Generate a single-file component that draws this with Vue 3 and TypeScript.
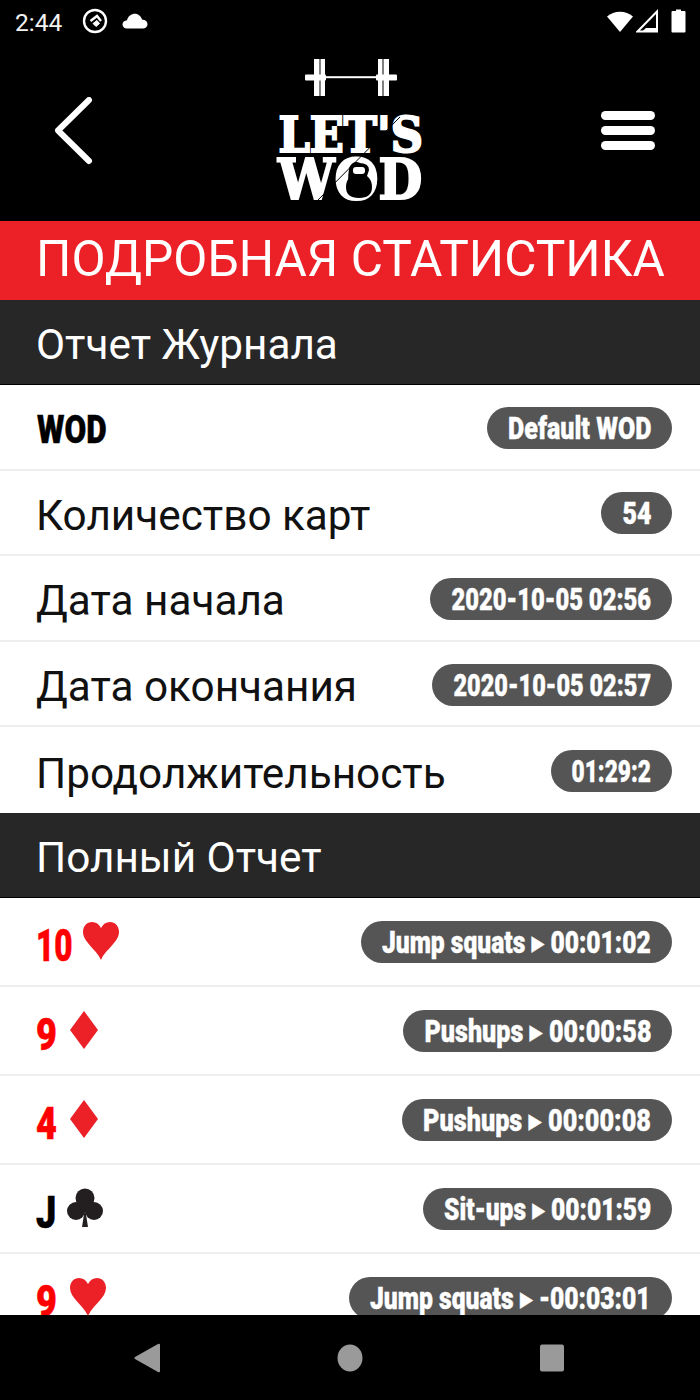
<template>
    <div ref="root" class="screen">
        <!-- Status bar -->
        <div class="status-bar">
            <span class="clock">2:44</span>
            <svg class="status-icon" width="26" height="26" viewBox="0 0 26 26" fill="none" stroke="#fff">
                <circle cx="13" cy="13" r="11" stroke-width="2.4" />
                <path d="M8.5 13 L15 8 L19 13" stroke-width="2.4" />
                <path d="M11 15.5 L15 12.5 L17.5 15.5 L14 18.5 Z" fill="#fff" stroke-width="1" />
            </svg>
            <svg class="status-icon cloud" width="26" height="16" viewBox="0 0 26 16" fill="#fff">
                <path d="M5 15.5 C2 15.5 0.5 13.5 0.5 11.5 C0.5 9 2.5 7.5 5 7.3 C6 3 9.5 0.8 12.8 0.8 C16.5 0.8 19 3.2 20 6.6 C23 6.8 25.5 8.6 25.5 11.3 C25.5 13.8 23.5 15.5 21 15.5 Z" />
            </svg>
            <div class="status-right">
                <svg width="28" height="24" viewBox="0 0 28 24" fill="#fff">
                    <path d="M1 7.5 C8 1 20 1 27 7.5 L14 23 Z" />
                </svg>
                <svg width="22" height="24" viewBox="0 0 22 24">
                    <path d="M1.5 22.5 L21 2.5 L21 22.5 Z" fill="none" stroke="#fff" stroke-width="2" />
                    <path d="M6 22.5 L21 22.5 L21 19 L10 19 Z" fill="#fff" />
                </svg>
                <svg class="battery" width="15" height="24" viewBox="0 0 15 24" fill="#fff">
                    <path d="M5 0.5 H10 V2 H13.5 Q14.5 2 14.5 3 V22.5 Q14.5 23.5 13.5 23.5 H1.5 Q0.5 23.5 0.5 22.5 V3 Q0.5 2 1.5 2 H5 Z" />
                </svg>
            </div>
        </div>

        <!-- App header -->
        <header class="app-header">
            <svg class="back-icon" width="40" height="68" viewBox="0 0 40 68" fill="none" stroke="#fff" stroke-width="6" stroke-linecap="round" stroke-linejoin="round">
                <path d="M35 3 L4 33.5 L35 64" />
            </svg>
            <div class="logo">
                <svg class="barbell" width="92" height="37" viewBox="0 0 92 37" fill="#fff">
                    <rect x="20" y="17.2" width="52" height="2" />
                    <rect x="0" y="15.5" width="21" height="6" rx="1" />
                    <rect x="71" y="15.5" width="21" height="6" rx="1" />
                    <rect x="9" y="0" width="5.5" height="37" />
                    <rect x="15.5" y="0" width="4.5" height="37" />
                    <rect x="73" y="0" width="4.5" height="37" />
                    <rect x="78.5" y="0" width="5.5" height="37" />
                </svg>
                <div class="logo-text lets">LET'S</div>
                <div class="logo-text wod">WOD</div>
                <svg class="logo-overlay" width="146" height="86" viewBox="0 0 146 86">
                    <path d="M38 85 L122 0" stroke="#000" stroke-width="1" />
                    <path d="M71 53 Q71 46 81 46 Q91 46 91 53 L89 59 Q94 63 94 70 Q94 81 81 81 Q68 81 68 70 Q68 63 73 59 Z" fill="#000" />
                    <rect x="75" y="50" width="12" height="7" rx="3" fill="#fff" />
                </svg>
            </div>
            <div class="menu-icon">
                <span></span>
                <span></span>
                <span></span>
            </div>
        </header>

        <div class="page-title">ПОДРОБНАЯ СТАТИСТИКА</div>

        <div class="content">
            <div class="section-title">Отчет Журнала</div>
            <div v-for="row in journalRows" :key="row.label" class="row">
                <span class="row-label" :class="{ 'row-label-bold': row.bold }">{{ row.label }}</span>
                <span class="pill" :style="{ width: row.pill + 'px' }"><span class="pill-text">{{ row.value }}</span></span>
            </div>

            <div class="section-title">Полный Отчет</div>
            <div v-for="(card, i) in cards" :key="i" class="row card-row">
                <span class="card-name">
                    <span class="card-rank" :class="{ red: card.suit !== 'club', wide: card.rank.length > 1 }">
                        <span class="rank-text">{{ card.rank }}</span>
                    </span>
                    <svg v-if="card.suit === 'heart'" class="suit" width="38" height="40" viewBox="0 0 38 40" fill="#ec2027">
                        <path d="M19 39 C15 29 1 21 1 11 C1 5 5 1 10 1 C14 1 17 3 19 7 C21 3 24 1 28 1 C33 1 37 5 37 11 C37 21 23 29 19 39 Z" />
                    </svg>
                    <svg v-else-if="card.suit === 'diamond'" class="suit" width="30" height="38" viewBox="0 0 30 38" fill="#ec2027">
                        <path d="M15 0 L29 19 L15 38 L1 19 Z" />
                    </svg>
                    <svg v-else class="suit suit-club" width="36" height="40" viewBox="0 0 36 40" fill="#231f20">
                        <circle cx="18" cy="10" r="9.5" />
                        <circle cx="9" cy="23" r="9" />
                        <circle cx="27" cy="23" r="9" />
                        <path d="M15 14 H21 V24 H15 Z" />
                        <path d="M18 20 L21 39 H15 Z" />
                    </svg>
                </span>
                <span class="pill" :style="{ width: card.pill + 'px' }">
                    <span class="pill-text">{{ card.exercise }} <span class="arrow">▶</span> {{ card.time }}</span>
                </span>
            </div>
        </div>

        <!-- Android nav bar -->
        <div class="nav-bar">
            <svg width="28" height="32" viewBox="0 0 28 32" fill="#9a9a9a">
                <path d="M25 2 Q27 1 27 3 V29 Q27 31 25 30 L2 17 Q0.5 16 2 15 Z" />
            </svg>
            <svg width="26" height="28" viewBox="0 0 26 28" fill="#9a9a9a">
                <ellipse cx="13" cy="14" rx="12.5" ry="13.5" />
            </svg>
            <svg width="26" height="28" viewBox="0 0 26 28" fill="#9a9a9a">
                <rect x="1" y="0.5" width="24" height="27" rx="2" />
            </svg>
        </div>
    </div>
</template>

<script setup lang="ts">
import { onMounted, ref } from "vue";

interface InfoRow {
    label: string;
    value: string;
    pill: number;
    bold?: boolean;
}

interface CardRow {
    rank: string;
    suit: "heart" | "diamond" | "club";
    exercise: string;
    time: string;
    pill: number;
}

const root = ref<HTMLElement | null>(null);

const journalRows: InfoRow[] = [
    { label: "WOD", value: "Default WOD", pill: 185, bold: true },
    { label: "Количество карт", value: "54", pill: 71 },
    { label: "Дата начала", value: "2020-10-05 02:56", pill: 242 },
    { label: "Дата окончания", value: "2020-10-05 02:57", pill: 240 },
    { label: "Продолжительность", value: "01:29:2", pill: 121 },
];

const cards: CardRow[] = [
    { rank: "10", suit: "heart", exercise: "Jump squats", time: "00:01:02", pill: 311 },
    { rank: "9", suit: "diamond", exercise: "Pushups", time: "00:00:58", pill: 269 },
    { rank: "4", suit: "diamond", exercise: "Pushups", time: "00:00:08", pill: 270 },
    { rank: "J", suit: "club", exercise: "Sit-ups", time: "00:01:59", pill: 249 },
    { rank: "9", suit: "heart", exercise: "Jump squats", time: "-00:03:01", pill: 323 },
];

onMounted(() => {
    root.value?.querySelectorAll<HTMLElement>(".pill").forEach((pill) => {
        const text = pill.querySelector<HTMLElement>(".pill-text");
        if (!text) return;
        const scale = (pill.clientWidth - 42) / text.offsetWidth;
        text.style.transform = `scaleX(${scale})`;
    });
});
</script>

<style>
html,
body {
    margin: 0;
    background: #fff;
}
</style>

<style scoped>
.screen {
    width: 700px;
    height: 1400px;
    display: flex;
    flex-direction: column;
    overflow: hidden;
    background: #fff;
    font-family: Roboto, "Noto Sans", sans-serif;
}

.status-bar {
    height: 48px;
    flex: none;
    display: flex;
    align-items: center;
    padding: 0 14px 0 15px;
    background: #000;
    color: #f2f2f2;
}

.clock {
    font-size: 24.5px;
    margin-right: 20px;
    margin-top: -4px;
}

.status-icon {
    margin-right: 14px;
    margin-top: -6px;
}

.status-right {
    margin-left: auto;
    display: flex;
    align-items: center;
    gap: 2px;
    margin-top: -6px;
}

.battery {
    margin-left: 11px;
}

.app-header {
    height: 173px;
    flex: none;
    display: flex;
    align-items: flex-start;
    justify-content: space-between;
    background: #000;
    padding: 0 45px 0 54px;
    box-sizing: border-box;
}

.back-icon {
    margin-top: 49px;
}

.logo {
    position: relative;
    width: 146px;
    display: flex;
    flex-direction: column;
    align-items: center;
    padding-top: 11px;
    margin-left: 6px;
}

.barbell {
    flex: none;
    margin-bottom: 19px;
}

.logo-text {
    font-family: "DejaVu Serif", serif;
    font-weight: 700;
    color: #fff;
    white-space: nowrap;
    -webkit-text-stroke: 2.2px #fff;
}

.lets {
    font-size: 48px;
    line-height: 40px;
    transform: scaleX(0.93);
}

.wod {
    font-size: 56px;
    line-height: 48px;
    transform: scaleX(0.9);
}

.logo-overlay {
    position: absolute;
    left: 0;
    top: 69px;
}

.menu-icon {
    margin-top: 63px;
    display: flex;
    flex-direction: column;
    gap: 6px;
    width: 54px;
}

.menu-icon span {
    height: 9px;
    border-radius: 5px;
    background: #fff;
}

.page-title {
    height: 79px;
    flex: none;
    line-height: 77px;
    background: #ec2027;
    color: #fff;
    font-size: 49.6px;
    padding-left: 36px;
    white-space: nowrap;
}

.content {
    flex: 1;
    min-height: 0;
    overflow: hidden;
}

.section-title {
    height: 85px;
    line-height: 90px;
    box-sizing: border-box;
    border-bottom: 1px solid #000;
    background: #272727;
    color: #fff;
    font-size: 42.3px;
    padding-left: 36px;
}

.row {
    height: 85.6px;
    box-sizing: border-box;
    display: flex;
    align-items: center;
    justify-content: space-between;
    padding: 0 28px 0 36px;
    border-bottom: 2px solid #eeeeee;
}

.row:has(+ .section-title) {
    border-bottom: none;
}

.card-row {
    height: 89px;
}

.row-label {
    font-size: 42.3px;
    color: #111;
    margin-top: 6px;
}

.row-label-bold {
    font-size: 38px;
    font-weight: 900;
    color: #000;
    display: inline-block;
    margin-left: 1px;
    transform: scaleX(0.83);
    transform-origin: left center;
    -webkit-text-stroke: 0.5px #000;
}

.pill {
    height: 42px;
    flex: none;
    box-sizing: border-box;
    display: flex;
    align-items: center;
    justify-content: center;
    border-radius: 21px;
    background: #555555;
    overflow: hidden;
    margin-top: 2px;
}

.pill-text {
    flex: none;
    font-weight: 900;
    font-size: 31px;
    color: #fff;
    white-space: nowrap;
    margin-top: 1px;
    -webkit-text-stroke: 0.4px #fff;
}

.arrow {
    font-size: 21px;
    font-family: "DejaVu Sans", sans-serif;
    vertical-align: 3px;
}

.card-name {
    display: flex;
    align-items: center;
    gap: 11px;
}

.card-rank {
    width: 22px;
    font-size: 45px;
    font-weight: 900;
    color: #000;
    margin-top: 8px;
    white-space: nowrap;
    -webkit-text-stroke: 0.6px currentColor;
}

.card-rank.wide {
    width: 35px;
}

.rank-text {
    display: inline-block;
    transform: scaleX(0.8);
    transform-origin: left center;
}

.card-rank.wide .rank-text {
    transform: scaleX(0.7);
}

.card-rank.red {
    color: #ff0000;
}

.suit {
    flex: none;
}

.suit-club {
    margin-left: -2px;
}

.nav-bar {
    height: 85px;
    flex: none;
    display: flex;
    align-items: center;
    background: #000;
    padding: 0 135px 0 133px;
    justify-content: space-between;
    box-sizing: border-box;
}
</style>
